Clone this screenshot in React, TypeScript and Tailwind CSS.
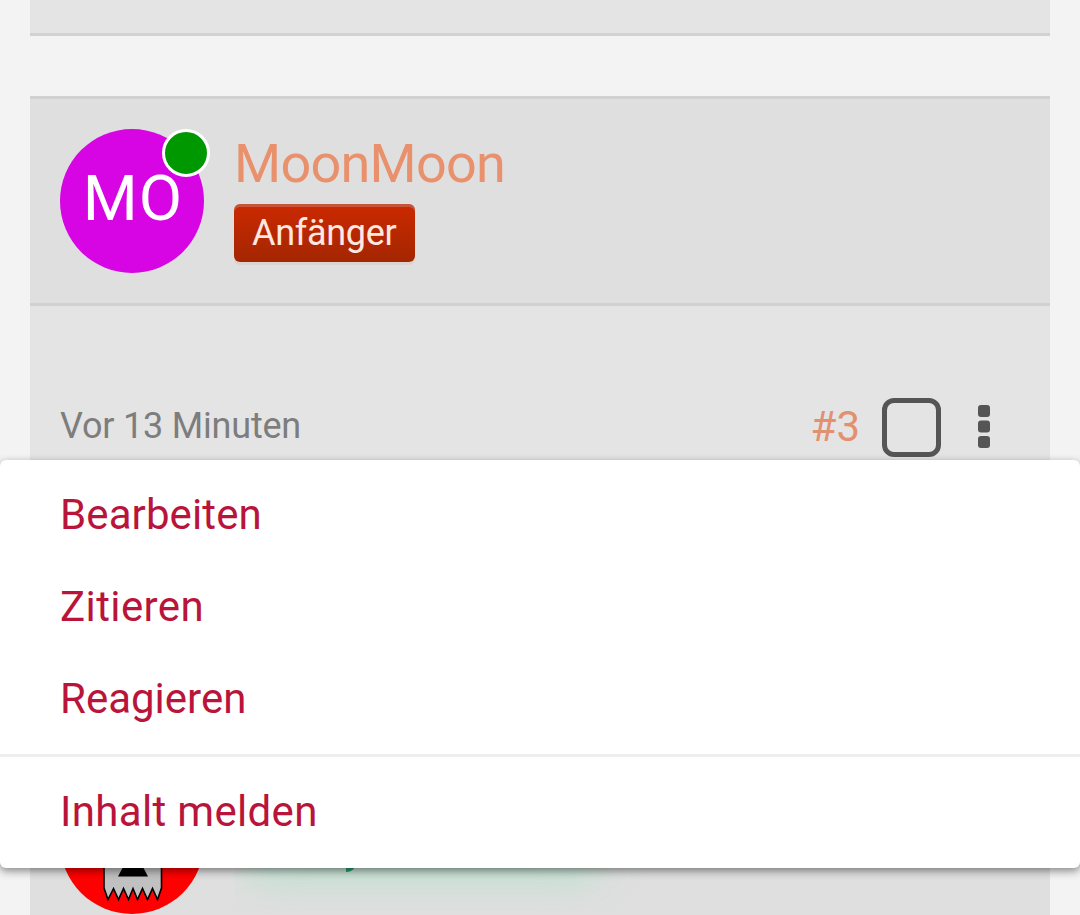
import type { ReactNode } from "react";

const menuItems = [
    { label: "Bearbeiten", className: "tracking-[0.1px]" },
    { label: "Zitieren", className: "tracking-[0.4px]" },
    { label: "Reagieren", className: "tracking-normal" },
];

function MenuItem({ children, className }: { children: ReactNode, className: string }) {
    return (
        <li className="flex h-[92px] items-center px-[60px] text-[42px] leading-none text-[#b9143a]">
            <button type="button" className={`cursor-pointer ${className}`}>{children}</button>
        </li>
    );
}

function UserAvatar() {
    return (
        <div className="relative size-36 shrink-0">
            <svg viewBox="0 0 144 144" className="size-36">
                <circle cx="72" cy="72" r="72" fill="#d704e3" />
                <text x="73" y="91" textAnchor="middle" fontSize="63" letterSpacing="1" fill="#fff">MO</text>
            </svg>
            {/* Online badge */}
            <span className="absolute -right-1.5 top-0 size-12 rounded-full border-3 border-white bg-[#009800]" />
        </div>
    );
}

function GhostAvatar() {
    return (
        <svg viewBox="0 0 144 144" className="size-36 shrink-0">
            <circle cx="72" cy="72" r="72" fill="#ff0000" />
            <path
                d="M44 60V118L48 129.5L53.5 118.5L58.5 129.5L63.5 118.5L68.5 129.5L73 118.5L77.5 129.5L82.5 118.5L87.5 129.5L92.5 118.5L97.5 129.5L101.5 118V60Z"
                fill="#c1c1c1"
                stroke="#000"
                strokeWidth="1.6"
            />
            <path d="M73 78L88 106.5H58Z" fill="#000" />
        </svg>
    );
}

export default function App() {
    return (
        <main className="relative h-[915px] overflow-hidden bg-[#f3f3f3] px-[30px] font-['Roboto',sans-serif]">
            <div className="h-9 border-b-3 border-[#d1d1d1] bg-[#e4e4e4]" />

            {/* Post */}
            <article className="mt-[60px] h-[581px] border-y-3 border-[#d1d1d1] bg-[#e4e4e4]">
                <header className="flex h-[207px] gap-[30px] border-b-3 border-[#d1d1d1] bg-[#dfdfdf] p-[30px]">
                    <UserAvatar />
                    <div className="flex flex-col items-start pt-[3px]">
                        <h2 className="h-[72px] text-[54px] leading-[63px] tracking-[-0.75px] text-[#e8916c]">MoonMoon</h2>
                        <span className="flex h-[58px] w-[181px] items-center rounded-[6px] bg-linear-to-b from-[#cc2900] to-[#a32600] px-[18px] text-[36px] leading-none tracking-[-0.3px] text-[#ffe8e0] shadow-[inset_0_3px_0_rgba(190,190,190,0.3),0_3px_0_rgba(190,150,140,0.15)]">
                            Anfänger
                        </span>
                    </div>
                </header>

                <div className="flex items-center justify-between px-[30px] pt-[91px]">
                    <time className="-mt-0.5 text-[36px] leading-[63px] tracking-[-0.2px] text-[#7d7d7d]">Vor 13 Minuten</time>
                    <div className="flex items-center pr-[30px]">
                        <a className="-mt-0.5 text-[42px] leading-[63px] text-[#e39070]">#3</a>
                        <span className="ml-[22px] size-[59px] rounded-[12px] border-5 border-[#555]" />
                        <button type="button" aria-label="Mehr" className="-mt-0.5 ml-[37px]">
                            <svg viewBox="0 0 12 43" className="h-[43px] w-3" fill="#555">
                                <rect width="12" height="12" rx="3" />
                                <rect y="15.5" width="12" height="12" rx="3" />
                                <rect y="31" width="12" height="12" rx="3" />
                            </svg>
                        </button>
                    </div>
                </div>
            </article>

            {/* Next post, mostly covered by the menu */}
            <article className="mt-[60px] flex h-[210px] gap-[30px] border-t-3 border-[#d1d1d1] bg-[#dfdfdf] p-[30px]">
                <GhostAvatar />
                <div className="relative h-36 grow overflow-hidden">
                    <div className="absolute left-2 top-0 h-[108px] w-[360px] rounded-3xl bg-[#b8e0cd] blur-[20px]" />
                    <span className="absolute left-[112px] top-[92px] h-[9.5px] w-[10px] rounded-br-[9px] bg-[#1fa36c]" />
                </div>
            </article>

            {/* Dropdown */}
            <ul className="absolute inset-x-0 top-[460px] h-[408px] rounded-[6px] bg-white py-[9px] shadow-[0_3px_9px_rgba(0,0,0,0.45)]">
                {menuItems.map(({ label, className }) => (
                    <MenuItem key={label} className={className}>{label}</MenuItem>
                ))}
                <li className="my-[9px] h-[3px] bg-[#eee]" />
                <MenuItem className="tracking-[0.33px]">Inhalt melden</MenuItem>
            </ul>
        </main>
    );
}
